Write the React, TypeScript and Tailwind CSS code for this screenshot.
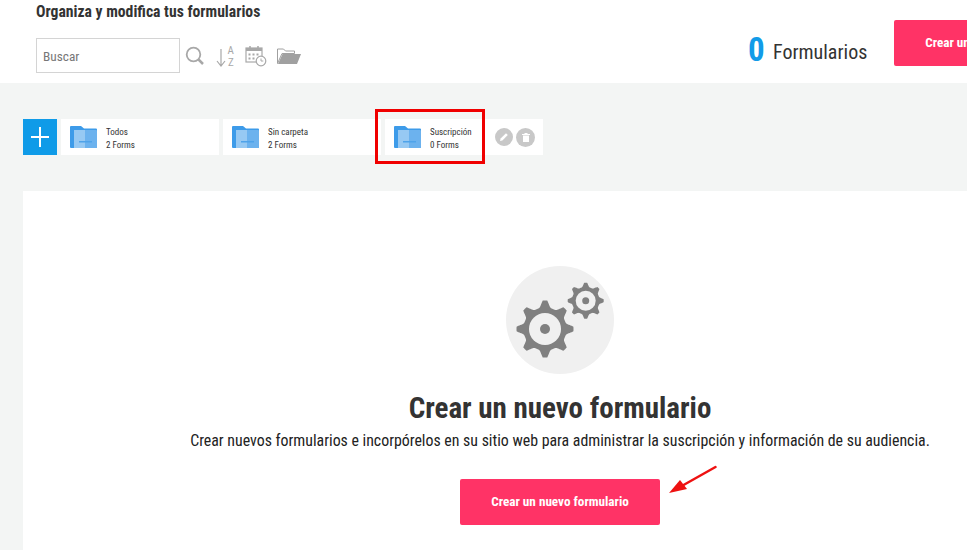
const font = "font-['Roboto','Liberation_Sans',sans-serif] [font-stretch:75%]";

const Folder = () => (
  <svg width="28" height="24" viewBox="0 0 28 24" className="shrink-0">
    <path d="M0 2a1 1 0 0 1 1-1h10l3 2.500h12a1 1 0 0 1 1 1V22a1 1 0 0 1-1 1H1a1 1 0 0 1-1-1z" fill="#3d9be9" />
    <rect x="4" y="5" width="23" height="18" rx="1" fill="#6cb2ee" />
    <rect x="4" y="5" width="11" height="18" fill="#97c9f3" />
    <rect x="9" y="16" width="13" height="1.500" fill="#4fa3ea" />
  </svg>
);

// outline with 8 rounded teeth, one pointing straight up
const gearPath = (cx: number, cy: number, valley: number, outer: number) => {
  const points: string[] = [];
  for (let i = 0; i < 320; i++) {
    const a = (i / 320) * Math.PI * 2;
    const wave = Math.min(1, 1.25 * Math.pow((Math.cos(8 * a) + 1) / 2, 2.2));
    const radius = valley + (outer - valley) * wave;
    points.push(`${(cx + radius * Math.sin(a)).toFixed(2)} ${(cy - radius * Math.cos(a)).toFixed(2)}`);
  }
  return `M${points.join('L')}Z`;
};

const Gear = ({ cx, cy, valley, outer, hole, dot }: { cx: number; cy: number; valley: number; outer: number; hole: number; dot: number }) => (
  <g>
    <path d={gearPath(cx, cy, valley, outer)} fill="#808080" strokeLinejoin="round" />
    <circle cx={cx} cy={cy} r={hole} fill="#f0f0f0" />
    <circle cx={cx} cy={cy} r={dot} fill="#808080" />
  </g>
);

const FolderCard = ({ name, count, width }: { name: string; count: string; width: string }) => (
  <div className={`flex h-9 items-center gap-2 bg-white pl-[9px] ${width}`}>
    <Folder />
    <div className="pt-[3px] text-[9px] leading-[13px] text-[#333]">
      <div>{name}</div>
      <div>{count}</div>
    </div>
  </div>
);

export default function App() {
  return (
    <div className={`relative h-[550px] w-[967px] overflow-hidden bg-[#f3f5f4] ${font}`}>
      <header className="flex h-[83px] bg-white">
        <div className="w-[748px] shrink-0 pl-9">
          <h2 className="pt-[2px] text-[15.700px] leading-[20px] font-bold text-[#333]">Organiza y modifica tus formularios</h2>
          <div className="mt-4 flex items-center">
            <div className="flex h-[35px] w-[144px] items-center border border-[#d4d4d4] pt-[2px] pl-[6px] text-[13.300px] text-[#777]">Buscar</div>
            <svg width="20" height="20" viewBox="0 0 20 20" className="ml-[5px]" fill="none" stroke="#a8a8a8">
              <circle cx="8.500" cy="8.500" r="6.800" strokeWidth="1.800" />
              <path d="M13.500 13.500l4.500 4.500" strokeWidth="2.500" />
            </svg>
            <svg width="20" height="24" viewBox="0 0 20 24" className="ml-[11px]" fill="none" stroke="#a8a8a8" strokeWidth="1.200">
              <path d="M5 5v17M1 17l4 5 4-5" />
              <text x="11.500" y="10" fontSize="11" fill="#a8a8a8" stroke="none">A</text>
              <text x="12" y="22" fontSize="11" fill="#a8a8a8" stroke="none">Z</text>
            </svg>
            <svg width="22" height="22" viewBox="0 0 22 22" className="ml-[9px]" fill="none">
              <rect x="1" y="3" width="16" height="14" stroke="#a8a8a8" strokeWidth="1.200" />
              <rect x="1" y="3" width="16" height="3" fill="#a8a8a8" />
              <path d="M5 1v3M13 1v3" stroke="#a8a8a8" strokeWidth="1.500" />
              <path d="M3.500 8.500h2v2h-2zM7.500 8.500h2v2h-2zM11.500 8.500h2v2h-2zM3.500 12.500h2v2h-2zM7.500 12.500h2v2h-2z" fill="#a8a8a8" />
              <circle cx="16" cy="16" r="4.800" fill="#fff" stroke="#a8a8a8" strokeWidth="1.200" />
              <path d="M16 13.500V16h2.300" stroke="#a8a8a8" />
            </svg>
            <svg width="24" height="16" viewBox="0 0 24 16" className="ml-[10px]">
              <path d="M0.500 15.500V1h6l2 2h9v2.500H5z" fill="none" stroke="#a0a0a0" />
              <path d="M1 16L5.500 6H24l-4 10z" fill="#a0a0a0" />
            </svg>
          </div>
        </div>
        <div className="flex h-[71px] shrink-0 items-end">
          <span className="w-[25px] text-[33px] leading-[42px] font-bold text-[#129be8]">0</span>
          <span className="w-[121px] text-[20px] leading-[38px] text-[#333]">Formularios</span>
        </div>
        <button className="mt-[20px] h-[46px] w-[200px] shrink-0 rounded-[2px] bg-[#ff3366] text-[13.200px] font-bold text-white">
          Crear un nuevo formulario
        </button>
      </header>

      <div className="mt-9 flex h-9 pl-[23px]">
        <div className="flex h-9 w-[34px] items-center justify-center bg-[#0f9be8]">
          <svg width="20" height="24" viewBox="0 0 20 24">
            <path d="M10 2v20M1 12h18" stroke="#fff" strokeWidth="2" />
          </svg>
        </div>
        <div className="ml-1 flex gap-1">
          <FolderCard name="Todos" count="2 Forms" width="w-[158px]" />
          <FolderCard name="Sin carpeta" count="2 Forms" width="w-[158px]" />
          <div className="flex h-9 w-[158px] items-center bg-white">
            <FolderCard name="Suscripción" count="0 Forms" width="w-[110px]" />
            <span className="flex size-[18px] items-center justify-center rounded-full bg-[#c8c8c8]">
              <svg width="10" height="10" viewBox="0 0 10 10">
                <path d="M1 9l.6-2.400L7 1.200 8.800 3 3.400 8.400z" fill="#fff" />
              </svg>
            </span>
            <span className="ml-[3px] flex size-[19px] items-center justify-center rounded-full bg-[#c8c8c8]">
              <svg width="8" height="9" viewBox="0 0 8 9">
                <path d="M0 1h8v1H0zM2.500 0h3v1h-3zM1 2.500h6V9H1z" fill="#fff" />
              </svg>
            </span>
          </div>
        </div>
      </div>

      <main className="mt-9 ml-[23px] flex h-[400px] w-[1074px] flex-col items-center bg-white pt-[75px]">
        <svg width="108" height="108" viewBox="0 0 108 108" className="shrink-0">
          <circle cx="54" cy="54" r="54" fill="#f0f0f0" />
          <Gear cx={39} cy={63} valley={21.500} outer={28.500} hole={16} dot={5} />
          <Gear cx={79.700} cy={34.700} valley={13.800} outer={18} hole={10} dot={3.500} />
        </svg>
        <h1 className="mt-[16px] text-[29px] leading-[36px] font-bold text-[#333]">Crear un nuevo formulario</h1>
        <p className="mt-[3px] text-[15.870px] leading-[24px] text-[#222]">
          Crear nuevos formularios e incorpórelos en su sitio web para administrar la suscripción y información de su audiencia.
        </p>
        <button className="mt-[26px] h-[46px] w-[200px] rounded-[2px] bg-[#ff3366] text-[13.200px] font-bold text-white">
          Crear un nuevo formulario
        </button>
      </main>

      {/* annotations added on top of the screenshot */}
      <div className="absolute top-[109px] left-[375px] h-[55px] w-[110px] border-[3px] border-[#f00000]" />
      <svg className="absolute top-[464px] left-[666px]" width="54" height="32" viewBox="0 0 54 32">
        <path d="M49.500 3L14 23" stroke="#ee1111" strokeWidth="2.500" strokeLinecap="round" />
        <path d="M3 29L14 16l7 9z" fill="#ee1111" />
      </svg>
    </div>
  );
}
